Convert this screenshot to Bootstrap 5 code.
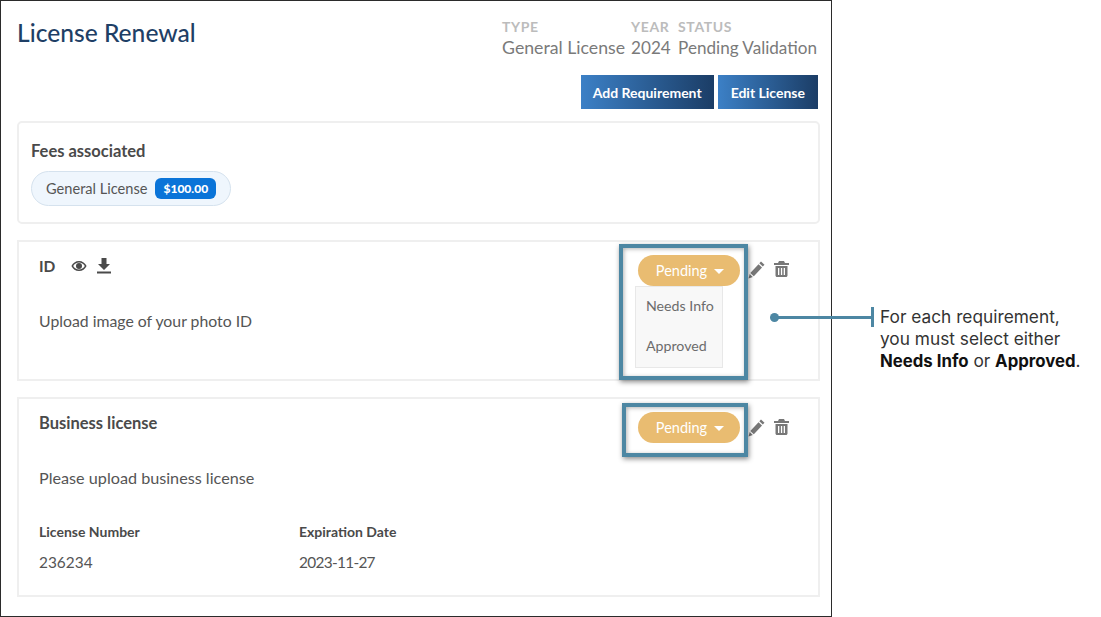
<!DOCTYPE html>
<html lang="en">
<head>
  <meta charset="UTF-8">
  <meta name="viewport" content="width=device-width, initial-scale=1.0">
  <title>License Renewal</title>
  <link href="https://cdn.jsdelivr.net/npm/bootstrap@5.3.0/dist/css/bootstrap.min.css" rel="stylesheet">
  <style>
    body { background: #fff; font-family: "Lato", "Liberation Sans", sans-serif; color: #4a4a4a; width: 1101px; height: 617px; overflow: hidden; position: relative; }
    .shot-frame { width: 832px; height: 617px; border: 1px solid #2b2b2b; padding: 0 11px 0 16px; position: relative; }
    .page-head { height: 74px; padding-top: 17px; }
    .page-title { font-size: 24.6px; line-height: 30px; font-weight: 500; color: #1f3f66; margin: 0; }
    .meta-wrap { margin-right: 3px; }
    .meta-label { font-size: 14px; line-height: 18px; font-weight: 700; letter-spacing: .6px; color: #bcbcbc; }
    .meta-value { font-size: 17.1px; line-height: 24px; color: #7a7a7a; white-space: nowrap; }
    .meta-type { width: 129px; }
    .meta-type .meta-value { font-size: 17.7px; }
    .meta-year { width: 47px; }
    .btn-grad { background: linear-gradient(90deg, #3c80c6, #1b3d66); color: #fff; border: 0; border-radius: 0; height: 34px; font-size: 14px; font-weight: 700; padding: 0 12px; }
    .btn-edit { padding: 0 13px; }
    .btn-row { margin-right: 2px; }
    .req-box { border: 2px solid #efefef; border-radius: 0; margin-bottom: 16px; position: relative; }
    .fees-box { border-radius: 5px; height: 103px; padding: 18px 12px; margin-top: 12px; }
    .box-title { font-size: 16.5px; line-height: 20px; font-weight: 700; color: #4a4a4a; }
    .id-title { font-size: 15.5px; }
    .fee-pill { background: #eff6fd; border: 1px solid #d5e2ee; border-radius: 18px; height: 35px; width: 200px; padding-left: 14px; font-size: 14.6px; color: #555; margin-top: 10px; }
    .fee-amount { background: #0a74d8; color: #fff; font-size: 12px; font-weight: 900; border-radius: 6px; height: 21px; line-height: 21px; padding: 0 8px; margin-left: 8px; }
    .id-box { height: 141px; }
    .biz-box { height: 200px; }
    .box-row { position: absolute; left: 20px; }
    .req-desc { font-size: 15.8px; line-height: 20px; color: #555; }
    .biz-box .req-desc { font-size: 16.2px; }
    .field-label { font-size: 14px; line-height: 18px; font-weight: 700; color: #4a4a4a; }
    .field-value { font-size: 15.4px; line-height: 20px; color: #555; }
    .field-date { letter-spacing: -.7px; }
    .status-btn { position: absolute; left: 619px; top: 13px; width: 102px; height: 31px; background: #e9bc71; color: #fff; border: 0; border-radius: 16px; font-size: 14.5px; padding: 0 0 0 2px; }
    .status-btn::after { margin-left: 7px; vertical-align: 2px; border-top-width: 5px; border-left-width: 5px; border-right-width: 5px; }
    .status-menu { position: absolute; left: 616px; top: 44px; width: 88px; height: 82px; background: #f8f8f8; border: 1px solid #e8e8e8; }
    .status-menu div { height: 40px; line-height: 38px; padding-left: 10px; font-size: 14.2px; color: #6c6c6c; }
    .tool-icon { position: absolute; top: 19px; color: #777; }
    .biz-box .tool-icon { top: 20px; }
    .mark-box { position: absolute; border: 4px solid #4d87a3; box-shadow: 1px 2px 5px rgba(0,0,0,.45), inset 1px 1px 4px rgba(0,0,0,.3); pointer-events: none; }
    .call-line { position: absolute; left: 775px; top: 316px; width: 97px; height: 3px; background: #4d87a3; }
    .call-dot { position: absolute; left: 770px; top: 313px; width: 9px; height: 9px; border-radius: 50%; background: #4d87a3; }
    .call-tick { position: absolute; left: 871px; top: 307px; width: 3px; height: 20px; background: #4d87a3; }
    .call-text { position: absolute; left: 880px; top: 306px; width: 215px; font-family: "Inter", "Open Sans", sans-serif; font-size: 17.3px; line-height: 22px; color: #333; }
    .call-text b { color: #111; font-size: 16.8px; }
    .icon-gap { gap: 10px; }
  </style>
</head>
<body>
  <div class="shot-frame">
    <div class="page-head d-flex justify-content-between">
      <h1 class="page-title">License Renewal</h1>
      <div class="meta-wrap d-flex">
        <div class="meta-type"><div class="meta-label">TYPE</div><div class="meta-value">General License</div></div>
        <div class="meta-year"><div class="meta-label">YEAR</div><div class="meta-value">2024</div></div>
        <div><div class="meta-label">STATUS</div><div class="meta-value">Pending Validation</div></div>
      </div>
    </div>
    <div class="btn-row d-flex justify-content-end gap-1">
      <button class="btn btn-grad" type="button">Add Requirement</button>
      <button class="btn btn-grad btn-edit" type="button">Edit License</button>
    </div>

    <div class="req-box fees-box">
      <div class="box-title">Fees associated</div>
      <div class="fee-pill d-flex align-items-center">General License <span class="fee-amount">$100.00</span></div>
    </div>

    <div class="req-box id-box">
      <div class="box-row box-title id-title d-flex align-items-center gap-3" style="top:14px">
        <span>ID</span>
        <span class="d-flex align-items-center icon-gap">
          <svg width="16" height="12" viewBox="0 0 16 12"><path fill="#4a4a4a" fill-rule="evenodd" d="M8 1C4.600 1 1.800 3 .4 6c1.400 3 4.200 5 7.600 5s6.200-2 7.600-5C14.200 3 11.400 1 8 1zm0 1.600c2.400 0 4.600 1.300 5.800 3.400-1.200 2.100-3.400 3.400-5.800 3.400S3.400 8.100 2.200 6C3.400 3.900 5.600 2.600 8 2.600z"/><circle cx="8" cy="6" r="3" fill="#4a4a4a"/></svg>
          <svg width="14" height="16" viewBox="0 0 14 16"><path fill="#4a4a4a" d="M4.500 0h5v6H13L7 12 1 6h3.500zM0 13.500h14V15.500H0z"/></svg>
        </span>
      </div>
      <div class="box-row req-desc" style="top:69px">Upload image of your photo ID</div>
      <button class="status-btn dropdown-toggle" type="button">Pending</button>
      <div class="status-menu"><div>Needs Info</div><div>Approved</div></div>
      <svg class="tool-icon" style="left:729px" width="17" height="18" viewBox="0 0 17 18"><path fill="#777" d="M13 .5l3.500 3.300-1.700 1.800-3.500-3.300z"/><path fill="#777" d="M10.500 3.300L14 6.600 5.800 15.300 2.300 12z"/><path fill="#777" d="M1.700 13L4.800 16 .5 17.500z"/></svg>
      <svg class="tool-icon" style="left:755px" width="15" height="16" viewBox="0 0 15 16"><path fill="#777" fill-rule="evenodd" d="M5 0h5l1 2h4v2H0V2h4zM1.500 5h12v9.500c0 .8-.7 1.500-1.500 1.500H3c-.8 0-1.500-.7-1.500-1.500zM4 7v7h1.300V7zm2.900 0v7h1.300V7zm2.800 0v7H11V7z"/></svg>
    </div>

    <div class="req-box biz-box">
      <div class="box-row box-title" style="top:14px">Business license</div>
      <div class="box-row req-desc" style="top:69px">Please upload business license</div>
      <div class="box-row" style="top:124px"><div class="field-label">License Number</div></div>
      <div class="box-row field-value" style="top:153px">236234</div>
      <div class="box-row" style="top:124px;left:280px"><div class="field-label">Expiration Date</div></div>
      <div class="box-row field-value field-date" style="top:153px;left:280px">2023-11-27</div>
      <button class="status-btn dropdown-toggle" type="button">Pending</button>
      <svg class="tool-icon" style="left:729px" width="17" height="18" viewBox="0 0 17 18"><path fill="#777" d="M13 .5l3.500 3.300-1.700 1.800-3.500-3.300z"/><path fill="#777" d="M10.500 3.300L14 6.600 5.800 15.300 2.300 12z"/><path fill="#777" d="M1.700 13L4.800 16 .5 17.500z"/></svg>
      <svg class="tool-icon" style="left:755px" width="15" height="16" viewBox="0 0 15 16"><path fill="#777" fill-rule="evenodd" d="M5 0h5l1 2h4v2H0V2h4zM1.500 5h12v9.500c0 .8-.7 1.500-1.500 1.500H3c-.8 0-1.500-.7-1.500-1.500zM4 7v7h1.300V7zm2.900 0v7h1.300V7zm2.800 0v7H11V7z"/></svg>
    </div>
  </div>

  <div class="mark-box" style="left:619px;top:244px;width:129px;height:136px"></div>
  <div class="mark-box" style="left:622px;top:403px;width:126px;height:54px"></div>
  <div class="call-line"></div>
  <div class="call-dot"></div>
  <div class="call-tick"></div>
  <div class="call-text">For each requirement,<br>you must select either<br><b>Needs Info</b> or <b>Approved</b>.</div>

  <script src="https://cdn.jsdelivr.net/npm/bootstrap@5.3.0/dist/js/bootstrap.bundle.min.js"></script>
</body>
</html>
